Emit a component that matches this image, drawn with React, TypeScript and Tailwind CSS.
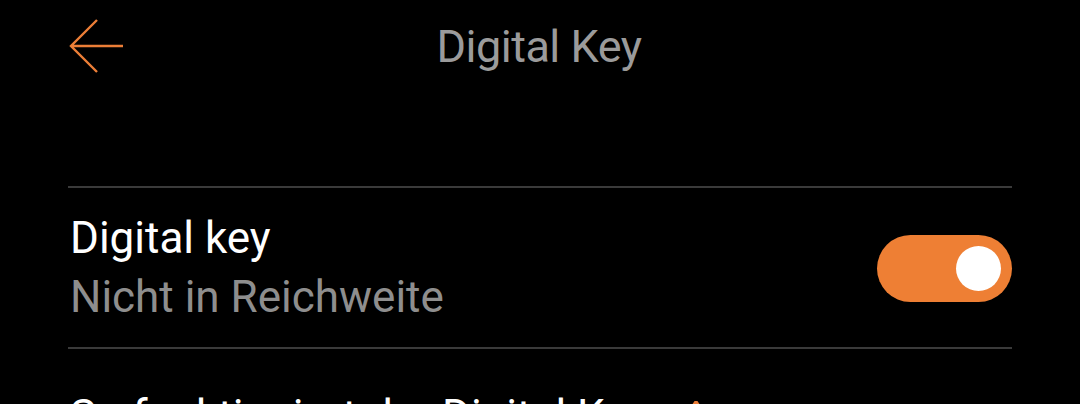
import React from "react";

export default function App() {
  return (
    <div
      className="w-[1080px] h-[404px] overflow-hidden bg-black"
      style={{ fontFamily: "Roboto, 'Liberation Sans', sans-serif" }}
    >
      {/* Header */}
      <div className="relative h-[92px] flex items-center justify-center">
        <svg
          className="absolute left-[68px] top-[18px]"
          width="58"
          height="56"
          viewBox="0 0 58 56"
          fill="none"
        >
          <path
            d="M29 2 L3 28 L29 54 M3 28 L55 28"
            stroke="#ec7e37"
            strokeWidth="2.4"
            strokeLinecap="butt"
            strokeLinejoin="miter"
          />
        </svg>
        <span className="text-[45px] leading-none text-[#9b9b9b] tracking-[-0.5px] mr-[2px]">
          Digital Key
        </span>
      </div>

      <div className="px-[68px] pt-[94px]">
        <div className="h-[2px] bg-[#3a3a3a]" />
        <div className="h-[159px] flex items-center justify-between">
          <div className="flex flex-col pl-[2px]">
            <span className="text-[44px] leading-[59px] text-white">
              Digital key
            </span>
            <span className="text-[44px] leading-[59px] text-[#8e8e8e]">
              Nicht in Reichweite
            </span>
          </div>
          <div className="w-[135px] h-[67px] rounded-full bg-[#ee7f34] flex items-center justify-end pr-[11px] mt-[2px]">
            <div className="w-[45px] h-[45px] rounded-full bg-white" />
          </div>
        </div>
        <div className="h-[2px] bg-[#3a3a3a]" />
        <div className="pt-[38px] pl-[2px] flex items-start">
          <span className="text-[44px] leading-[59px] text-white whitespace-nowrap">
            So funktioniert der Digital Key
          </span>
          <svg
            className="ml-[33px] mt-[14px] shrink-0"
            width="30"
            height="30"
            viewBox="0 0 30 30"
            fill="none"
          >
            <path d="M5 15 L15 0 L25 15" stroke="#ec7e37" strokeWidth="2.4" />
          </svg>
        </div>
      </div>
    </div>
  );
}
